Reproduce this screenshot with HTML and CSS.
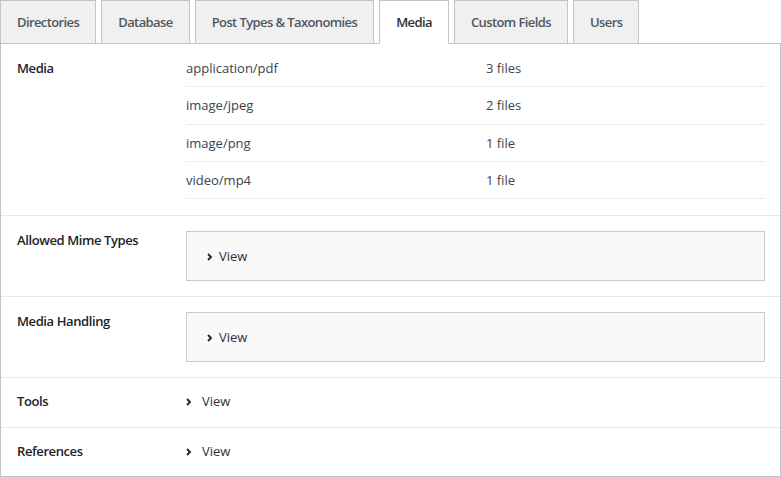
FILE: index.html
```html
<!DOCTYPE html>
<html>
<head>
<meta charset="utf-8">
<link rel="stylesheet" href="styles.css">
</head>
<body>
<div class="tabs">
  <div class="tab">Directories</div>
  <div class="tab">Database</div>
  <div class="tab">Post Types &amp; Taxonomies</div>
  <div class="tab active">Media</div>
  <div class="tab">Custom Fields</div>
  <div class="tab">Users</div>
</div>
<div class="panel">
  <div class="section first">
    <div class="label">Media</div>
    <div class="value">
      <div class="rows">
        <div class="row"><span class="type">application/pdf</span><span class="count">3 files</span></div>
        <div class="row"><span class="type">image/jpeg</span><span class="count">2 files</span></div>
        <div class="row"><span class="type">image/png</span><span class="count">1 file</span></div>
        <div class="row"><span class="type">video/mp4</span><span class="count">1 file</span></div>
      </div>
    </div>
  </div>
  <div class="section">
    <div class="label">Allowed Mime Types</div>
    <div class="value">
      <div class="box"><span class="toggle"><svg class="chev" width="6" height="8" viewBox="0 0 6 8"><path d="M1 1 L4 4 L1 7" fill="none" stroke="#23282d" stroke-width="1.9"/></svg>View</span></div>
    </div>
  </div>
  <div class="section">
    <div class="label">Media Handling</div>
    <div class="value">
      <div class="box"><span class="toggle"><svg class="chev" width="6" height="8" viewBox="0 0 6 8"><path d="M1 1 L4 4 L1 7" fill="none" stroke="#23282d" stroke-width="1.9"/></svg>View</span></div>
    </div>
  </div>
  <div class="section simple">
    <div class="label">Tools</div>
    <div class="value">
      <span class="toggle plain"><svg class="chev" width="6" height="8" viewBox="0 0 6 8"><path d="M1 1 L4 4 L1 7" fill="none" stroke="#23282d" stroke-width="1.9"/></svg>View</span>
    </div>
  </div>
  <div class="section simple last">
    <div class="label">References</div>
    <div class="value">
      <span class="toggle plain"><svg class="chev" width="6" height="8" viewBox="0 0 6 8"><path d="M1 1 L4 4 L1 7" fill="none" stroke="#23282d" stroke-width="1.9"/></svg>View</span>
    </div>
  </div>
</div>
</body>
</html>
```

FILE: styles.css
```css
* { box-sizing: border-box; }
html, body { margin: 0; padding: 0; background: #fff; }
body {
  font-family: "Open Sans", "Noto Sans", sans-serif;
  font-size: 13px;
  color: #3c434a;
  width: 781px;
}
.tabs {
  display: flex;
  height: 44px;
  align-items: stretch;
}
.tab {
  height: 44px;
  padding: 0 16px;
  margin-right: 5px;
  border: 1px solid #c3c4c7;
  background: #f0f0f1;
  color: #50575e;
  font-weight: 600;
  letter-spacing: -0.6px;
  line-height: 42px;
  position: relative;
  z-index: 0;
}
.tab.active {
  background: #fff;
  border-bottom-color: #fff;
  z-index: 2;
  color: #2c3338;
}
.panel {
  border: 1px solid #c3c4c7;
  margin-top: -1px;
  position: relative;
  z-index: 1;
  height: 434px;
}
.section {
  display: flex;
  padding: 15px 15px 15px 16px;
  border-bottom: 1px solid #e8e8e9;
  line-height: 19px;
}
.section.first { padding-bottom: 16px; }
.section.simple { padding-top: 14px; padding-bottom: 16px; }
.section.last { border-bottom: none; }
.label {
  width: 169px;
  flex: none;
  font-weight: 600;
  letter-spacing: -0.4px;
  color: #1d2327;
}
.value { flex: 1; display: flex; flex-direction: column; align-items: stretch; }
.rows { margin-top: -10px; }
.row {
  display: flex;
  line-height: 20px;
  padding: 8px 0 8px;
  border-bottom: 1px solid #ececec;
}
.row:first-child { padding: 9px 0 8px; }
.row:nth-child(2) { padding-bottom: 9px; }
.type { width: 300px; }
.box {
  display: flex;
  border: 1px solid #c8cbcf;
  background: #f9f9f9;
  padding: 14px 20px 14px;
  line-height: 20px;
}
.toggle {
  display: flex;
  align-items: center;
  color: #2c3338;
}
.chev { margin-right: 6px; margin-top: 1px; }
.plain .chev { margin-right: 10px; }
```
